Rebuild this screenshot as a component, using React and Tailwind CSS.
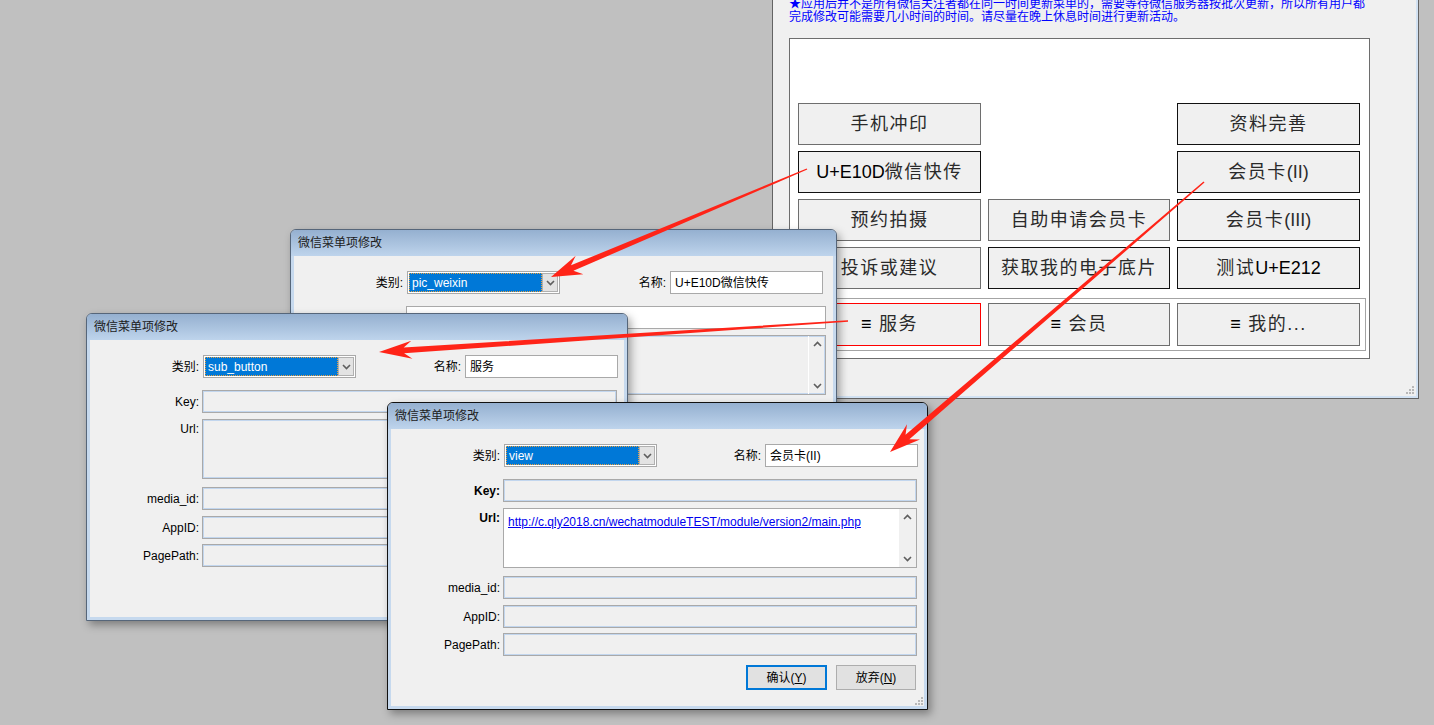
import React from "react";

const ui = "font-['Liberation_Sans','Noto_Sans_CJK_SC',sans-serif]";

const Chevron = ({ up }) => (
  <svg width="9" height="6" viewBox="0 0 9 6">
    <polyline
      points={up ? "1,5 4.5,1.5 8,5" : "1,1 4.5,4.5 8,1"}
      fill="none"
      stroke="#5e5e5e"
      strokeWidth="1.6"
    />
  </svg>
);

const Grip = () => (
  <svg width="9" height="9" viewBox="0 0 9 9">
    <rect x="7" y="1" width="2" height="2" fill="#b8b8b8" />
    <rect x="4" y="4" width="2" height="2" fill="#b8b8b8" />
    <rect x="7" y="4" width="2" height="2" fill="#b8b8b8" />
    <rect x="1" y="7" width="2" height="2" fill="#b8b8b8" />
    <rect x="4" y="7" width="2" height="2" fill="#b8b8b8" />
    <rect x="7" y="7" width="2" height="2" fill="#b8b8b8" />
  </svg>
);

// tapered red arrow, thin at the tail and wide at the head
const arrowPoints = (x1, y1, x2, y2, hl = 28, hw = 10) => {
  const dx = x2 - x1;
  const dy = y2 - y1;
  const len = Math.hypot(dx, dy);
  const ux = dx / len;
  const uy = dy / len;
  const nx = -uy;
  const ny = ux;
  const bx = x2 - ux * hl;
  const by = y2 - uy * hl;
  const p = (x, y) => `${x.toFixed(1)},${y.toFixed(1)}`;
  return [
    p(x1 + nx * 0.7, y1 + ny * 0.7),
    p(bx + ux * 5 + nx * 3, by + uy * 5 + ny * 3),
    p(bx - ux * 3 + nx * hw, by - uy * 3 + ny * hw),
    p(x2, y2),
    p(bx - ux * 3 - nx * hw, by - uy * 3 - ny * hw),
    p(bx + ux * 5 - nx * 3, by + uy * 5 - ny * 3),
    p(x1 - nx * 0.7, y1 - ny * 0.7),
  ].join(" ");
};

const Combo = ({ value }) => (
  <div className="ml-[4px] flex h-[23px] w-[153px] border border-[#a9a9a9] bg-white p-[1px]">
    <div className="flex flex-1 items-center border border-dotted border-[#e8a040] bg-[#0078d7] pl-[2px] text-white">
      {value}
    </div>
    <div className="flex w-[16px] items-center justify-center border border-[#b0b0b0] bg-[#e3e3e3]">
      <Chevron />
    </div>
  </div>
);

const Field = ({ white, className = "" }) => (
  <div
    className={`flex-1 border border-[#a9a9a9] ${
      white ? "bg-white" : "bg-[#f0f0f0] shadow-[inset_0_0_0_1px_#c2d6ee]"
    } ${className}`}
  />
);

const Scroll = ({ white }) => (
  <div
    className={`flex w-[17px] flex-col items-center justify-between py-[5px] ${
      white ? "bg-[#f0f0f0]" : "border-l border-white"
    }`}
  >
    <Chevron up />
    <Chevron />
  </div>
);

const Row = ({ label, bold, top, className = "", children }) => (
  <div className={`mr-[7px] flex ${top ? "items-start" : "items-center"} ${className}`}>
    <div className={`w-[109px] text-right ${top ? "pt-[1px]" : ""} ${bold ? "font-bold" : ""}`}>
      {label}
    </div>
    <div className="ml-[3px] flex flex-1 self-stretch">{children}</div>
  </div>
);

// rows that lie under another window are left out: full = every row,
// fields = no buttons, top = only up to the Url box
const Dialog = ({ pos, type, name, keyWhite, url, bold, active, show = "full", padR = "mr-[6px]" }) => (
  <div
    className={`absolute flex h-[308px] flex-col rounded-t-[6px] border bg-[#c6d9ee] shadow-[3px_4px_8px_rgba(0,0,0,0.35)] ${ui} text-[12px] text-black ${
      active ? "border-[#111111]" : "border-[#56667a]"
    } ${pos}`}
  >
    <div className="flex h-[26px] items-center rounded-t-[5px] bg-linear-to-b from-[#95b0d0] to-[#bed4ec] pl-[7px] text-[#1c1c1c]">
      微信菜单项修改
    </div>
    <div className="mx-[3px] mb-[3px] flex flex-1 flex-col bg-[#f0f0f0] pt-[15px]">
      <div className={`flex h-[23px] items-center ${padR}`}>
        <div className="w-[109px] text-right">类别:</div>
        <Combo value={type} />
        <div className="flex-1 text-right">名称:</div>
        <div className="ml-[4px] flex h-[23px] w-[153px] items-center border border-[#a9a9a9] bg-white pl-[4px]">
          {name}
        </div>
      </div>
      <Row label="Key:" bold={bold} className="mt-[12px] h-[23px]">
        <Field white={keyWhite} />
      </Row>
      <Row label="Url:" bold={bold} top className="mt-[6px] h-[60px]">
        {url === "link" && (
          <div className="flex flex-1 border border-[#a9a9a9] bg-white">
            <div className="flex-1 pl-[4px] pt-[4px] text-[#0000ee] underline">
              http://c.qly2018.cn/wechatmoduleTEST/module/version2/main.php
            </div>
            <Scroll white />
          </div>
        )}
        {url === "scroll" && (
          <div className="flex flex-1 border border-[#a9a9a9] bg-[#f0f0f0] shadow-[inset_0_0_0_1px_#c2d6ee]">
            <div className="flex-1" />
            <Scroll />
          </div>
        )}
        {url === "plain" && <Field />}
      </Row>
      {show !== "top" && (
        <>
          <Row label="media_id:" className="mt-[8px] h-[23px]">
            <Field />
          </Row>
          <Row label="AppID:" className="mt-[6px] h-[23px]">
            <Field />
          </Row>
          <Row label="PagePath:" className="mt-[5px] h-[23px]">
            <Field />
          </Row>
        </>
      )}
      {show === "full" && (
        <div className="mr-[8px] mt-[9px] flex justify-end gap-[9px]">
          <div className="flex h-[25px] w-[81px] items-center justify-center border-2 border-[#0078d7] bg-[#e1e1e1]">
            确认(<span className="underline">Y</span>)
          </div>
          <div className="flex h-[25px] w-[80px] items-center justify-center border border-[#adadad] bg-[#e1e1e1]">
            放弃(<span className="underline">N</span>)
          </div>
        </div>
      )}
      <div className="mt-auto flex justify-end pb-[1px] pr-[1px]">
        <Grip />
      </div>
    </div>
  </div>
);

const Btn = ({ children, dark, red, h = "h-[42px]" }) => (
  <div
    className={`flex ${h} items-center justify-center border bg-[#f0f0f0] text-[18px] tracking-[1.5px] text-[#2a2a2a] ${
      red ? "border-[#ff0000]" : dark ? "border-[#111111]" : "border-[#6e6e6e]"
    }`}
  >
    {children}
  </div>
);

const MainWindow = () => (
  <div className={`absolute left-[772px] top-[-30px] h-[429px] w-[647px] border-x border-b border-[#646464] bg-[#c9dcf1] ${ui}`}>
    <div className="flex h-full flex-col border-b-2 border-r-2 border-[#d2e2f3] bg-[#f0f0f0] pl-[16px] pt-[28px]">
      <div className="text-[12px] leading-[13px] text-[#0000ff]">
        <div className="whitespace-nowrap">
          ★应用后并不是所有微信关注者都在同一时间更新菜单的，需要等待微信服务器按批次更新，所以所有用户都
        </div>
        <div className="whitespace-nowrap">
          完成修改可能需要几小时间的时间。请尽量在晚上休息时间进行更新活动。
        </div>
      </div>
      <div className="mt-[14px] h-[321px] w-[581px] border border-[#6d6d6d] bg-white pt-[64px]">
        <div className="ml-[8px] grid grid-cols-[183px_182px_183px] gap-x-[7px] gap-y-[6px]">
          <Btn>手机冲印</Btn>
          <div />
          <Btn dark>资料完善</Btn>
          <Btn dark>
            <span className="tracking-normal text-black">U+E10D</span>微信快传
          </Btn>
          <div />
          <Btn dark>
            会员卡<span className="tracking-normal">(II)</span>
          </Btn>
          <Btn>预约拍摄</Btn>
          <Btn>自助申请会员卡</Btn>
          <Btn dark>
            会员卡<span className="tracking-normal">(III)</span>
          </Btn>
          <Btn>投诉或建议</Btn>
          <Btn dark>获取我的电子底片</Btn>
          <Btn dark>
            测试<span className="tracking-normal text-black">U+E212</span>
          </Btn>
        </div>
        <div className="ml-[3px] mt-[9px] w-[573px] border border-[#a4a4a4] p-[4px]">
          <div className="grid grid-cols-[183px_182px_183px] gap-x-[7px]">
            <Btn red h="h-[43px]">
              <span className="mr-[6px] font-bold text-black">≡</span>服务
            </Btn>
            <Btn h="h-[43px]">
              <span className="mr-[6px] font-bold text-black">≡</span>会员
            </Btn>
            <Btn h="h-[43px]">
              <span className="mr-[6px] font-bold text-black">≡</span>我的...
            </Btn>
          </div>
        </div>
      </div>
      <div className="mt-auto flex justify-end pb-[2px] pr-[2px]">
        <Grip />
      </div>
    </div>
  </div>
);

export default function App() {
  return (
    <div className="relative h-[725px] w-[1434px] overflow-hidden bg-[#c0c0c0]">
      <MainWindow />
      <Dialog pos="left-[290px] top-[229px] w-[547px]" type="pic_weixin" name="U+E10D微信快传" keyWhite url="scroll" show="top" padR="mr-[10px]" />
      <Dialog pos="left-[86px] top-[313px] w-[542px]" type="sub_button" name="服务" url="plain" show="fields" />
      <Dialog pos="left-[387px] top-[402px] w-[541px]" type="view" name="会员卡(II)" url="link" bold active />
      <svg className="pointer-events-none absolute left-0 top-0" width="1434" height="725">
        <polygon points={arrowPoints(807, 169, 551, 277)} fill="#ff2418" />
        <polygon points={arrowPoints(848, 321, 379, 352, 30, 9)} fill="#ff2418" />
        <polygon points={arrowPoints(1204, 182, 890, 452)} fill="#ff2418" />
      </svg>
    </div>
  );
}
